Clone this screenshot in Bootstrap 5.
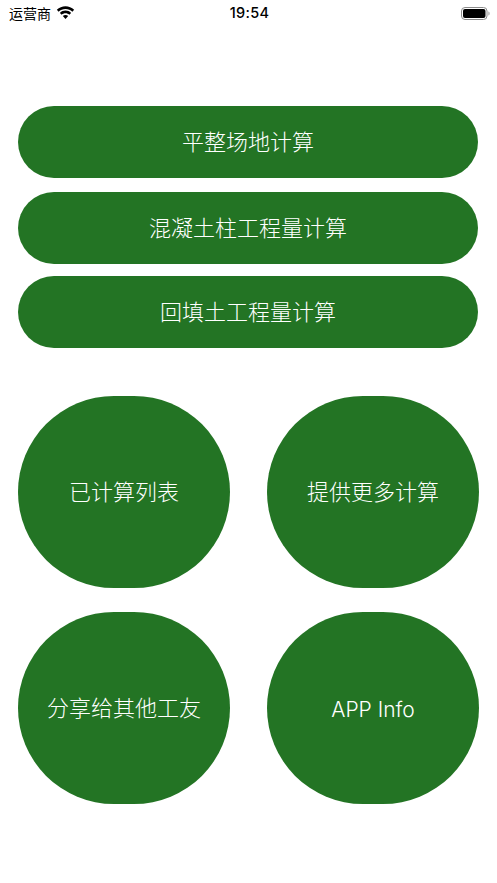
<!DOCTYPE html>
<html lang="zh">
<head>
<meta charset="utf-8">
<title>工程量计算</title>
<meta name="viewport" content="width=device-width, initial-scale=1">
<link rel="stylesheet" href="https://cdn.jsdelivr.net/npm/bootstrap@5.3.0/dist/css/bootstrap.min.css">
<style>
body { background: #fff; font-family: "Liberation Sans", "Noto Sans CJK SC", sans-serif; color: #000; }
.phone { width: 497px; height: 883px; overflow: hidden; }
.statusbar { height: 26px; padding: 0 7px 0 9px; font-size: 14px; font-family: "Noto Sans CJK SC", sans-serif; }
.status-side { width: 120px; }
.carrier-wrap { column-gap: 5px; }
.status-time { font-size: 14.5px; font-weight: 500; letter-spacing: .3px; font-family: Inter, "Liberation Sans", sans-serif; }
.menu-area { padding: 80px 18px 0 18px; }
.btn.pill-btn, .btn.round-btn {
  background: #237424; color: #fff; border: 0; font-size: 22px; font-weight: 300;
  font-family: "Noto Sans CJK SC", sans-serif; padding: 0 0 4px; line-height: 1;
}
.btn.pill-btn { width: 460px; height: 72px; border-radius: 36px; }
.btn.round-btn { width: 212px; height: 192px; border-radius: 96px; }
.round-grid { width: 461px; margin-top: 48px; row-gap: 24px; }
.btn.round-btn.latin-label { font-family: Inter, "Liberation Sans", sans-serif; font-weight: 300; font-size: 21px; padding: 2px 0 0; }
.gap-a { margin-top: 14px; }
.gap-b { margin-top: 12px; }
</style>
</head>
<body>
<div class="phone">
  <div class="statusbar d-flex align-items-center justify-content-between">
    <div class="status-side carrier-wrap d-flex align-items-center">
      <span>运营商</span>
      <svg width="19" height="14" viewBox="0 0 18 13"><path d="M9 2.600c2.500 0 4.800 1 6.500 2.600l1.700-1.800C14.900 1.300 12.100 0 9 0S3.100 1.300.800 3.400l1.700 1.800C4.200 3.600 6.500 2.600 9 2.600zM9 6.800c1.400 0 2.600.5 3.600 1.400l1.700-1.800C12.900 5 11 4.200 9 4.200S5.100 5 3.700 6.400l1.700 1.800C6.400 7.300 7.600 6.800 9 6.800zM9 8.400c-1 0-1.900.4-2.500 1L9 12.300l2.500-2.900c-.6-.6-1.500-1-2.500-1z" fill="#000"/></svg>
    </div>
    <div class="status-time">19:54</div>
    <div class="status-side d-flex justify-content-end">
      <svg width="29" height="13" viewBox="0 0 29 13"><rect x=".5" y=".5" width="25.500" height="12" rx="3.500" fill="none" stroke="#8a8a8a"/><rect x="2" y="2" width="22.500" height="9" rx="2" fill="#000"/><path d="M27.500 4.500c.7.300 1 1 1 2s-.3 1.700-1 2z" fill="#8a8a8a"/></svg>
    </div>
  </div>
  <div class="menu-area">
    <button type="button" class="btn pill-btn d-block">平整场地计算</button>
    <button type="button" class="btn pill-btn d-block gap-a">混凝土柱工程量计算</button>
    <button type="button" class="btn pill-btn d-block gap-b">回填土工程量计算</button>
    <div class="round-grid d-flex flex-wrap justify-content-between">
      <button type="button" class="btn round-btn">已计算列表</button>
      <button type="button" class="btn round-btn">提供更多计算</button>
      <button type="button" class="btn round-btn">分享给其他工友</button>
      <button type="button" class="btn round-btn latin-label">APP Info</button>
    </div>
  </div>
</div>
<script src="https://cdn.jsdelivr.net/npm/bootstrap@5.3.0/dist/js/bootstrap.bundle.min.js"></script>
</body>
</html>
